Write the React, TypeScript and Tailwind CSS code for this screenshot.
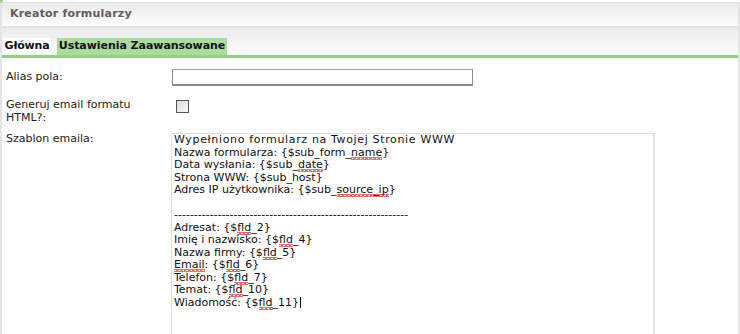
import React from "react";

const W = ({ children }: { children: React.ReactNode }) => (
  <span className="pb-[1px] bg-[linear-gradient(45deg,transparent_40%,#e06a6a_40%,#e06a6a_60%,transparent_60%),linear-gradient(135deg,transparent_40%,#e06a6a_40%,#e06a6a_60%,transparent_60%)] bg-[length:4px_3px] bg-repeat-x bg-bottom">
    {children}
  </span>
);

export default function App() {
  const font = { fontFamily: '"DejaVu Sans", Verdana, sans-serif' };
  return (
    <div className="w-[740px] h-[334px] overflow-hidden bg-white relative" style={font}>
      <div className="absolute left-0 top-0 w-[3px] h-[3px] bg-[#9fd293] rounded-br-[3px]" />
      <div className="h-full border-l-2 border-r-2 border-[#e4e4e4]">
        {/* header */}
        <div className="mt-[2px] h-[26px] border-t border-b-2 border-[#e2e2e2] bg-gradient-to-b from-[#ebebeb] to-[#fcfcfc] flex items-center pl-[8px]">
          <span className="text-[11px] font-bold text-[#5e5e5e] tracking-[0.2px]">Kreator formularzy</span>
        </div>
        {/* tabs */}
        <div className="h-[27px] bg-gradient-to-b from-[#ebebeb] to-[#fcfcfc] flex items-end pl-[1px] gap-[6px]">
          <div className="h-[17px] w-[48px] bg-white flex items-center justify-center text-[11px] font-bold text-[#111] tracking-[-0.2px]">Główna</div>
          <div className="h-[17px] w-[170px] bg-[#a9dc9d] flex items-center justify-center text-[11px] font-bold text-[#111] tracking-[-0.05px]">Ustawienia Zaawansowane</div>
        </div>
        <div className="h-[3px] bg-[#93d086]" />
        {/* form */}
        <div className="pl-[4px] text-[11px] text-[#222] leading-[13px]">
          <div className="mt-[11px] flex items-start">
            <div className="w-[166px] pt-[1px]">Alias pola:</div>
            <div className="w-[301px] h-[17px] border border-[#8c8c8c] border-t-[#9a9a9a] border-b-2 border-b-[#8a8a8a] bg-white" />
          </div>
          <div className="mt-[12px] flex items-start">
            <div className="w-[166px]">Generuj email formatu<br />HTML?:</div>
            <div className="mt-[2px] ml-[4px] w-[13px] h-[13px] border border-[#555] bg-gradient-to-br from-[#dcdcdc] to-[#f8f8f8]" />
          </div>
          <div className="mt-[8px] flex items-start">
            <div className="w-[165px]">Szablon emaila:</div>
            <div className="mt-[1px] w-[484px] h-[220px] border border-[#dedede] border-r-2 border-r-[#e4e4e4] pl-[2px] leading-[12.5px] text-[#111] whitespace-nowrap">
              <div className="tracking-[0.65px]">Wypełniono formularz na Twojej Stronie WWW</div>
              <div>Nazwa formularza: {"{$sub_form_"}<W>name</W>{"}"}</div>
              <div>Data wysłania: {"{$sub_"}<W>date</W>{"}"}</div>
              <div>Strona WWW: {"{$sub_host}"}</div>
              <div>Adres IP użytkownika: {"{$sub_"}<W>source_ip</W>{"}"}</div>
              <div>&nbsp;</div>
              <div>-----------------------------------------------------------</div>
              <div>Adresat: {"{$"}<W>fld</W>{"_2}"}</div>
              <div>Imię i nazwisko: {"{$"}<W>fld</W>{"_4}"}</div>
              <div>Nazwa firmy: {"{$"}<W>fld</W>{"_5}"}</div>
              <div><W>Email</W>: {"{$"}<W>fld</W>{"_6}"}</div>
              <div>Telefon: {"{$"}<W>fld</W>{"_7}"}</div>
              <div>Temat: {"{$"}<W>fld</W>{"_10}"}</div>
              <div>Wiadomość: {"{$"}<W>fld</W>{"_11}"}<span className="inline-block w-[1px] h-[11px] bg-black align-middle ml-[1px]" /></div>
            </div>
          </div>
        </div>
      </div>
    </div>
  );
}
